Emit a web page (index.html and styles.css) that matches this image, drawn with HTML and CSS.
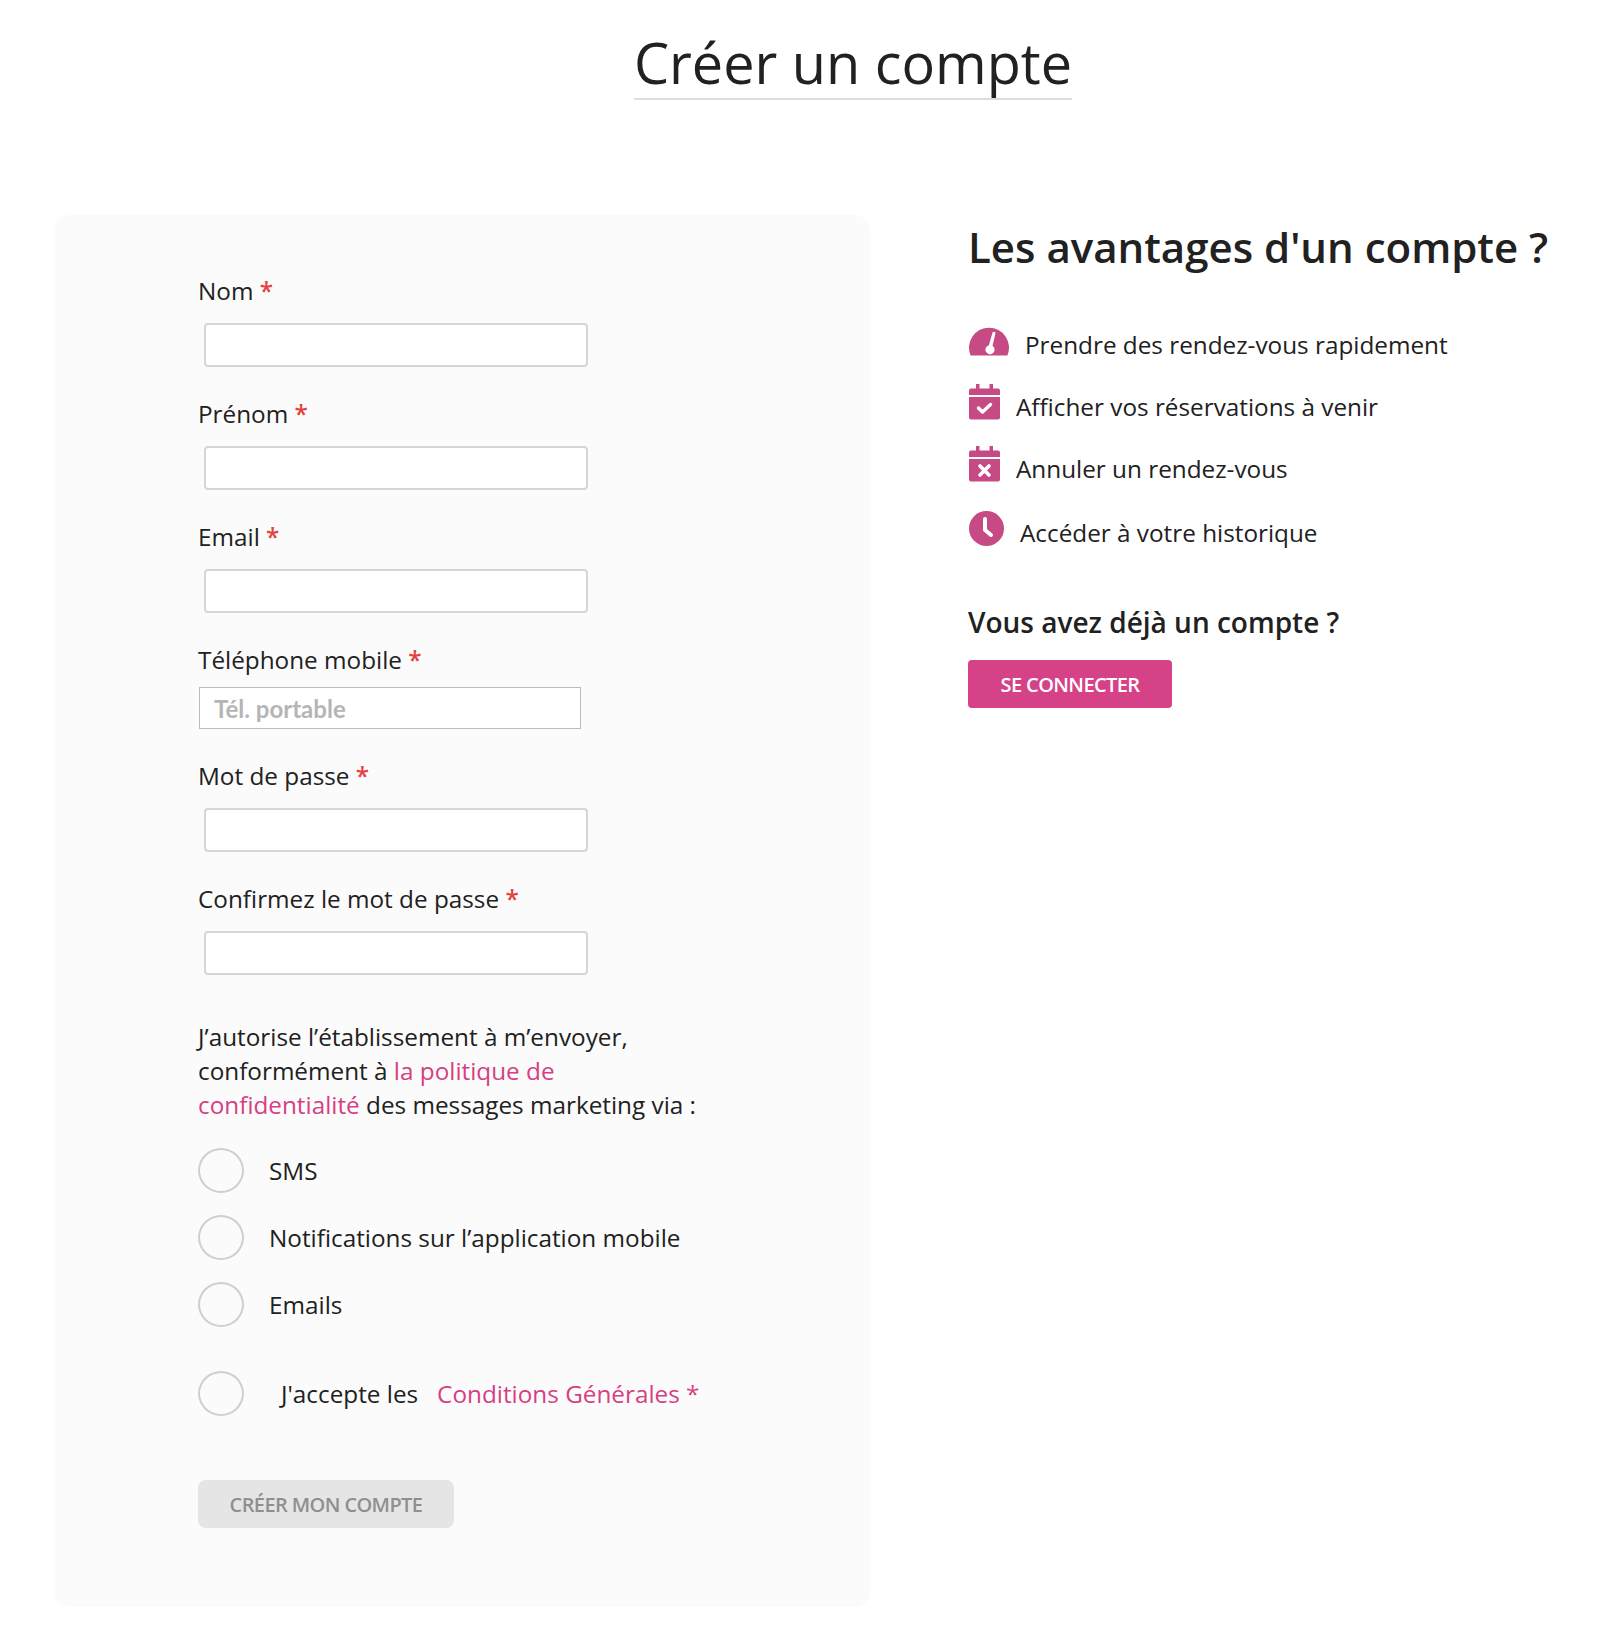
FILE: index.html
```html
<!DOCTYPE html>
<html lang="fr">

<head>
    <meta charset="UTF-8">
    <meta name="viewport" content="width=device-width, initial-scale=1.0">
    <title>Créer un compte</title>
    <link rel="stylesheet" href="styles.css">
</head>

<body>
    <header class="page-header">
        <h1 class="page-title">Créer un compte</h1>
    </header>

    <main class="page-content">
        <form class="signup-panel">
            <div class="field">
                <label class="field-label">Nom <span class="required">*</span></label>
                <input type="text" class="text-input">
            </div>
            <div class="field">
                <label class="field-label">Prénom <span class="required">*</span></label>
                <input type="text" class="text-input">
            </div>
            <div class="field">
                <label class="field-label">Email <span class="required">*</span></label>
                <input type="email" class="text-input">
            </div>
            <div class="field field-phone">
                <label class="field-label">Téléphone mobile <span class="required">*</span></label>
                <input type="tel" class="phone-input" placeholder="Tél. portable">
            </div>
            <div class="field">
                <label class="field-label">Mot de passe <span class="required">*</span></label>
                <input type="password" class="text-input">
            </div>
            <div class="field">
                <label class="field-label">Confirmez le mot de passe <span class="required">*</span></label>
                <input type="password" class="text-input">
            </div>

            <p class="consent-text">J’autorise l’établissement à m’envoyer, conformément à <a href="#" class="link">la politique de confidentialité</a> des messages marketing via :</p>

            <div class="option-row"><span class="round-check"></span><span>SMS</span></div>
            <div class="option-row"><span class="round-check"></span><span>Notifications sur l’application mobile</span></div>
            <div class="option-row"><span class="round-check"></span><span>Emails</span></div>

            <div class="option-row terms-row">
                <span class="round-check"></span>
                <span class="terms-text">J'accepte les</span>
                <a href="#" class="link">Conditions Générales <span>*</span></a>
            </div>

            <button type="button" class="btn btn-disabled">CRÉER MON COMPTE</button>
        </form>

        <aside class="benefits">
            <h2 class="benefits-title">Les avantages d'un compte ?</h2>

            <ul class="benefit-list">
                <li class="benefit-item">
                    <svg class="icon" width="40" height="32" viewBox="0 0 40 32">
                        <path d="M1.6 31.5A20 20 0 1 1 38.400 31.5Z" fill="#c64a84" />
                        <path d="M23.5 8.5a1.600 1.600 0 0 1 3 .8l-3 12.500a4.600 4.600 0 1 1-3.600-.6Z" fill="#fff" />
                    </svg>
                    <span>Prendre des rendez-vous rapidement</span>
                </li>
                <li class="benefit-item">
                    <svg class="icon" width="31" height="36" viewBox="0 0 31 36">
                        <path d="M7 0h3.500v4.500h10V0H24v4.500h5a2 2 0 0 1 2 2V11H0V6.500a2 2 0 0 1 2-2h5Z" fill="#c64a84" />
                        <path d="M0 13h31v20.500a2 2 0 0 1-2 2H2a2 2 0 0 1-2-2Z" fill="#c64a84" />
                        <path d="M9.500 24l4 4 8-7.500" fill="none" stroke="#fff" stroke-width="3.400" stroke-linecap="round" stroke-linejoin="round" />
                    </svg>
                    <span>Afficher vos réservations à venir</span>
                </li>
                <li class="benefit-item">
                    <svg class="icon" width="31" height="36" viewBox="0 0 31 36">
                        <path d="M7 0h3.500v4.500h10V0H24v4.500h5a2 2 0 0 1 2 2V11H0V6.500a2 2 0 0 1 2-2h5Z" fill="#c64a84" />
                        <path d="M0 13h31v20.500a2 2 0 0 1-2 2H2a2 2 0 0 1-2-2Z" fill="#c64a84" />
                        <path d="M11 20l9 9M20 20l-9 9" fill="none" stroke="#fff" stroke-width="3.600" stroke-linecap="round" />
                    </svg>
                    <span>Annuler un rendez-vous</span>
                </li>
                <li class="benefit-item">
                    <svg class="icon" width="35" height="35" viewBox="0 0 35 35">
                        <circle cx="17.500" cy="17.500" r="17.500" fill="#c64a84" />
                        <path d="M16 8v11l6 5" fill="none" stroke="#fff" stroke-width="4" stroke-linecap="round" stroke-linejoin="round" />
                    </svg>
                    <span>Accéder à votre historique</span>
                </li>
            </ul>

            <h3 class="login-title">Vous avez déjà un compte ?</h3>
            <button type="button" class="btn btn-primary">SE CONNECTER</button>
        </aside>
    </main>
</body>

</html>
```

FILE: styles.css
```css
body {
    margin: 0;
    font-family: "Open Sans", Arial, sans-serif;
    font-size: 24.3px;
    color: #212121;
    background-color: white;
}

.page-header {
    display: flex;
    justify-content: center;
    padding-top: 26px;
    padding-left: 88px;
}

.page-title {
    margin: 0;
    font-size: 55.8px;
    font-weight: 400;
    line-height: 72px;
    border-bottom: 2px solid #dcdcdc;
}

.page-content {
    display: flex;
    align-items: flex-start;
    gap: 98px;
    margin-top: 115px;
    padding-left: 54px;
    padding-bottom: 20px;
}

.signup-panel {
    box-sizing: border-box;
    width: 816px;
    height: 1392px;
    padding: 59px 0 0 144px;
    background-color: #fbfbfb;
    border-radius: 16px;
}

.field {
    margin-bottom: 30px;
}

.field-label {
    display: block;
    line-height: 33px;
    margin-bottom: 16px;
}

.required {
    color: #e2433c;
    font-weight: 600;
}

.text-input {
    display: block;
    box-sizing: border-box;
    width: 384px;
    height: 44px;
    margin-left: 6px;
    background-color: white;
    border: 2px solid #d6d6d6;
    border-radius: 4px;
}

.field-phone .field-label {
    margin-bottom: 11px;
}

.phone-input {
    display: block;
    box-sizing: border-box;
    width: 382px;
    height: 42px;
    margin-left: 1px;
    margin-bottom: 18px;
    padding: 0 14px;
    background-color: white;
    border: 1px solid #bdbdbd;
    border-radius: 0;
    font-family: Lato, Arial, sans-serif;
    font-size: 24px;
    font-weight: 700;
}

.phone-input::placeholder {
    color: #b5b5b5;
    opacity: 1;
}

.consent-text {
    width: 505px;
    margin: 45px 0 26px;
    line-height: 34px;
}

.link {
    color: #d63f83;
    text-decoration: none;
}

.option-row {
    display: flex;
    align-items: center;
    gap: 25px;
    height: 45px;
    margin-bottom: 22px;
}

.round-check {
    flex: none;
    box-sizing: border-box;
    width: 46px;
    height: 45px;
    border: 2px solid #cfcfcf;
    border-radius: 50%;
    background-color: #fbfbfb;
}

.terms-row {
    margin-top: 44px;
    margin-bottom: 64px;
}

.terms-text {
    margin-left: 12px;
    margin-right: -6px;
}

.btn {
    display: block;
    height: 48px;
    padding: 0;
    border: none;
    font-family: "Open Sans", Arial, sans-serif;
    font-size: 20px;
    font-weight: 600;
    letter-spacing: -0.6px;
    cursor: pointer;
}

.btn-disabled {
    width: 256px;
    background-color: #e5e5e5;
    color: #8f8f8f;
    border-radius: 8px;
}

.btn-primary {
    width: 204px;
    background-color: #d64288;
    color: white;
    border-radius: 4px;
}

.benefits {
    width: 600px;
}

.benefits-title {
    margin: 2px 0 0;
    font-size: 42px;
    font-weight: 600;
    line-height: 60px;
}

.benefit-list {
    margin: 49px 0 0;
    padding: 0 0 0 1px;
    list-style: none;
}

.benefit-item {
    display: flex;
    align-items: center;
    gap: 16px;
    height: 36px;
    margin-bottom: 26px;
}

.benefit-item:nth-child(3) {
    margin-bottom: 28px;
}

.icon {
    flex: none;
    margin-top: -8px;
}

.login-title {
    margin: 52px 0 18px;
    font-size: 28px;
    font-weight: 600;
    line-height: 40px;
}
```
